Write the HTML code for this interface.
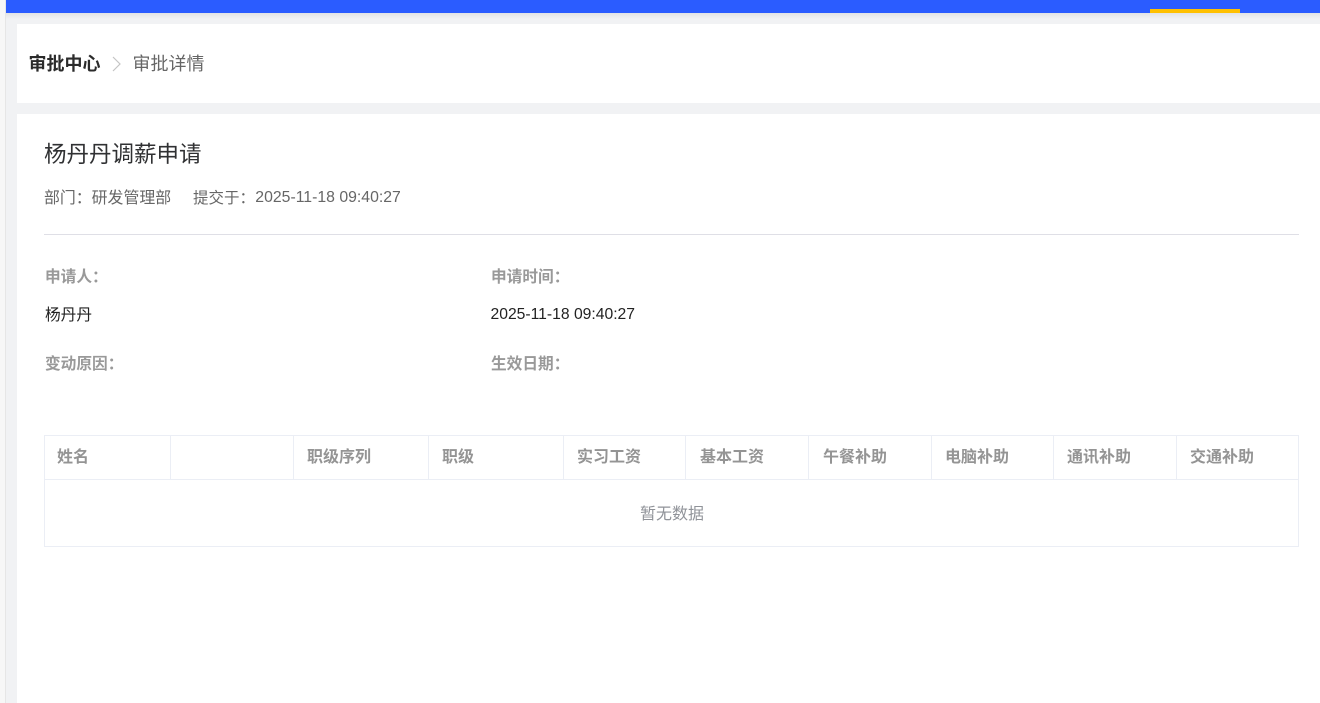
<!DOCTYPE html>
<html lang="zh-CN">
<head>
<meta charset="utf-8">
<title>审批详情</title>
<style>
html,body{margin:0;padding:0;width:1320px;height:703px;overflow:hidden;background:#f1f2f4;}
body{position:relative;font-family:"Liberation Sans","Noto Sans CJK SC",sans-serif;}
.a{position:absolute;}
.t{position:absolute;white-space:nowrap;line-height:20px;}
.lbl{font-weight:700;color:#999;}
.val{color:#222;}
.th{position:absolute;top:448px;white-space:nowrap;line-height:20px;font-size:16px;font-weight:700;color:#949494;}
.v{position:absolute;top:436px;width:1px;height:43px;background:#ebeef5;}
</style>
</head>
<body>
<div class="a" style="left:0;top:0;width:5px;height:703px;background:#f7f7f7;"></div>
<div class="a" style="left:5px;top:0;width:1px;height:703px;background:#e6e6e6;"></div>
<div class="a" style="left:6px;top:13px;width:1314px;height:6px;background:linear-gradient(#e2e3e5,#f1f2f4);"></div>
<div class="a" style="left:6px;top:0;width:1314px;height:13px;background:#2b5cff;"></div>
<div class="a" style="left:1150px;top:9px;width:90px;height:4px;background:#ffc000;"></div>

<div class="a" style="left:17px;top:24px;width:1303px;height:79px;background:#fff;"></div>
<div class="t" style="left:28.5px;top:54px;font-size:18px;font-weight:700;color:#2b2b2b;">审批中心</div>
<svg class="a" style="left:110px;top:56px;" width="12" height="16" viewBox="0 0 12 16"><path d="M3 1 L10 8 L3 15" fill="none" stroke="#c4c4c4" stroke-width="1.2"/></svg>
<div class="t" style="left:132.5px;top:54px;font-size:18px;color:#666;">审批详情</div>

<div class="a" style="left:17px;top:114px;width:1303px;height:589px;background:#fff;"></div>
<div class="t" style="left:44px;top:145px;font-size:22.5px;color:#303133;">杨丹丹调薪申请</div>
<div class="t" style="left:44px;top:189px;font-size:15.9px;color:#666;">部门：研发管理部</div>
<div class="t" style="left:193px;top:189px;font-size:15.5px;color:#666;">提交于：</div>
<div class="t" style="left:255.3px;top:188px;font-size:15.8px;color:#666;">2025-11-18 09:40:27</div>
<div class="a" style="left:44px;top:234px;width:1255px;height:1px;background:#dfdfe6;"></div>

<div class="t lbl" style="left:45px;top:268px;font-size:15.7px;">申请人：</div>
<div class="t lbl" style="left:491px;top:268px;font-size:15.7px;">申请时间：</div>
<div class="t val" style="left:45px;top:306px;font-size:15.7px;">杨丹丹</div>
<div class="t val" style="left:490.5px;top:305px;font-size:15.7px;">2025-11-18 09:40:27</div>
<div class="t lbl" style="left:45px;top:355px;font-size:15.7px;">变动原因：</div>
<div class="t lbl" style="left:491px;top:355px;font-size:15.7px;">生效日期：</div>

<div class="a" style="left:44px;top:435px;width:1253px;height:110px;border:1px solid #ebeef5;"></div>
<div class="a" style="left:45px;top:479px;width:1253px;height:1px;background:#ebeef5;"></div>
<div class="v" style="left:170px;"></div>
<div class="v" style="left:293px;"></div>
<div class="v" style="left:428px;"></div>
<div class="v" style="left:563px;"></div>
<div class="v" style="left:685px;"></div>
<div class="v" style="left:808px;"></div>
<div class="v" style="left:931px;"></div>
<div class="v" style="left:1053px;"></div>
<div class="v" style="left:1176px;"></div>

<div class="th" style="left:57px;">姓名</div>
<div class="th" style="left:307px;">职级序列</div>
<div class="th" style="left:442px;">职级</div>
<div class="th" style="left:577px;">实习工资</div>
<div class="th" style="left:700px;">基本工资</div>
<div class="th" style="left:823px;">午餐补助</div>
<div class="th" style="left:945px;">电脑补助</div>
<div class="th" style="left:1067px;">通讯补助</div>
<div class="th" style="left:1190px;">交通补助</div>

<div class="t" style="left:640px;top:505px;font-size:16px;color:#909399;">暂无数据</div>
</body>
</html>
